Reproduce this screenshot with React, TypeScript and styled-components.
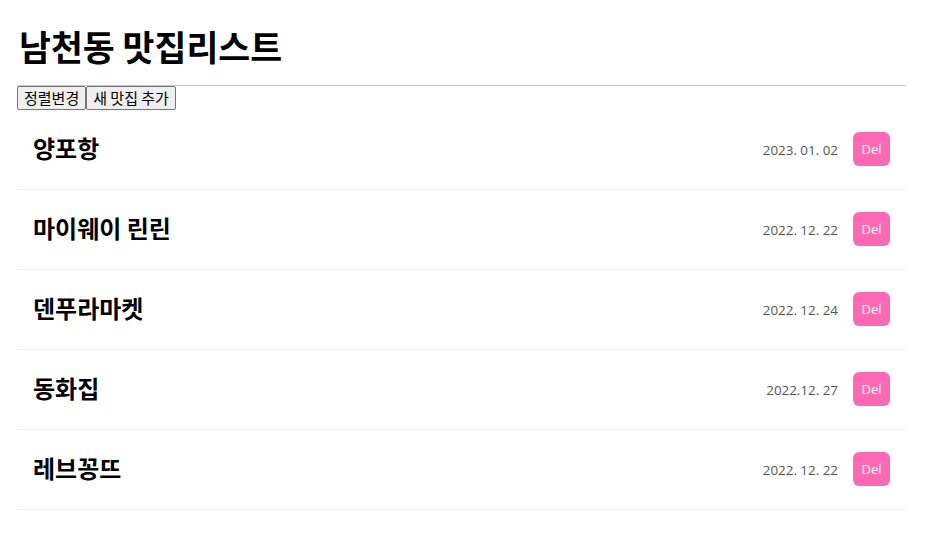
import React from "react";
import styled, { createGlobalStyle } from "styled-components";

const Global = createGlobalStyle`
  body {
    margin: 8px;
    font-family: "Noto Sans CJK KR", "Noto Sans", sans-serif;
    background: #fff;
  }
`;

const Page = styled.div`
  padding: 0 18px 0 9px;
`;

const Title = styled.h1`
  margin: 10px 0 0 2px;
  font-size: 34.7px;
  font-weight: 700;
  line-height: 56px;
  color: #000;
`;

const Divider = styled.hr`
  margin: 11px 0 0;
  border: none;
  border-top: 1px solid #c6c6c6;
`;

const Toolbar = styled.div`
  display: flex;
`;

const ToolButton = styled.button`
  font-family: "Noto Sans CJK KR", sans-serif;
  font-size: 15px;
  line-height: 17px;
  padding: 2px 6px 3px;
  background: #efefef;
  border: 1px solid #767676;
  border-radius: 2px;
  color: #000;
`;

const List = styled.ul`
  list-style: none;
  margin: 0;
  padding: 0;
`;

const Row = styled.li`
  display: flex;
  align-items: center;
  height: 79px;
  padding: 0 16px;
  border-bottom: 1px solid #ebebeb;
`;

const Name = styled.h3`
  flex: 1;
  margin: 0;
  font-size: 24px;
  font-weight: 700;
  color: #000;
  transform: translateY(-2px);
`;

const DateText = styled.span`
  font-family: "Open Sans", "Noto Sans", sans-serif;
  font-size: 13.4px;
  color: #555;
  margin-right: 15px;
`;

const DelButton = styled.button`
  width: 37px;
  height: 34px;
  border: none;
  border-radius: 6px;
  background: #ff69b4;
  color: #fff;
  font-family: "Open Sans", "Noto Sans", sans-serif;
  font-size: 13px;
  padding: 0;
  transform: translateY(-1px);
`;

const items = [
  { name: "양포항", date: "2023. 01. 02" },
  { name: "마이웨이 린린", date: "2022. 12. 22" },
  { name: "덴푸라마켓", date: "2022. 12. 24" },
  { name: "동화집", date: "2022.12. 27" },
  { name: "레브꽁뜨", date: "2022. 12. 22" },
];

export default function App() {
  return (
    <Page>
      <Global />
      <Title>남천동 맛집리스트</Title>
      <Divider />
      <Toolbar>
        <ToolButton>정렬변경</ToolButton>
        <ToolButton>새 맛집 추가</ToolButton>
      </Toolbar>
      <List>
        {items.map((it) => (
          <Row key={it.name}>
            <Name>{it.name}</Name>
            <DateText>{it.date}</DateText>
            <DelButton>Del</DelButton>
          </Row>
        ))}
      </List>
    </Page>
  );
}
